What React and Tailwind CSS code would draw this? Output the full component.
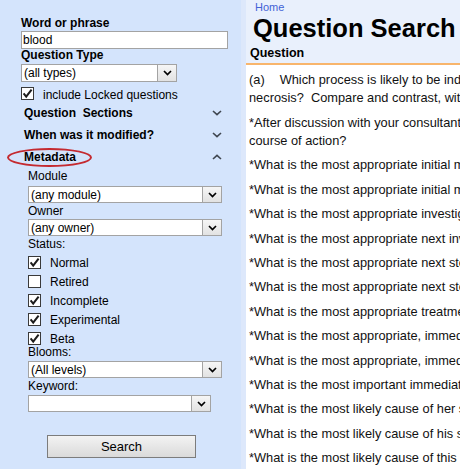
import React from 'react';

const Chevron = ({ up }) => (
  <svg width="10" height="6" viewBox="0 0 10 6" className="shrink-0">
    <path
      d={up ? 'M1 5L5 1.3L9 5' : 'M1 1L5 4.7L9 1'}
      fill="none"
      stroke="#3f4650"
      strokeWidth="1.6"
    />
  </svg>
);

const Box = ({ checked }) => (
  <span className="w-[13px] h-[13px] shrink-0 border border-[#3a3a3a] bg-white flex items-center justify-center">
    {checked && (
      <svg width="11" height="11" viewBox="0 0 11 11">
        <path d="M1.6 5.4L4.2 8.6L9.6 1.6" fill="none" stroke="#1c1c1c" strokeWidth="2" />
      </svg>
    )}
  </span>
);

const Select = ({ value, className }) => (
  <div className={`flex h-[17px] border border-[#a3a3a3] bg-white ${className}`}>
    <div className="flex-1 flex items-center pl-[2px] text-[12px] leading-[14px] whitespace-nowrap overflow-hidden">
      {value}
    </div>
    <div className="w-[19px] shrink-0 flex items-center justify-center border-l border-[#a3a3a3] bg-gradient-to-b from-[#f6f6f6] to-[#e2e2e2]">
      <svg width="9" height="6" viewBox="0 0 9 6">
        <path d="M1 1L4.5 4.5L8 1" fill="none" stroke="#000" strokeWidth="1.7" />
      </svg>
    </div>
  </div>
);

const Section = ({ title, up }) => (
  <div className="flex items-center justify-between h-[22px] pl-[24px] pr-[19px] text-[12px] font-bold leading-[14px]">
    <span className="whitespace-pre">{title}</span>
    <Chevron up={up} />
  </div>
);

const statuses = [
  ['Normal', true],
  ['Retired', false],
  ['Incomplete', true],
  ['Experimental', true],
  ['Beta', true],
];

const questions = [
  'initial management of this patient?',
  'initial management of this condition?',
  'investigation to confirm the diagnosis?',
  'next investigation in this patient?',
  'next step in management?',
  'next step in the management of this patient?',
  'treatment for this condition?',
];

const questions2 = [
  '*What is the most appropriate, immediate management?',
  '*What is the most appropriate, immediate treatment?',
  '*What is the most important immediate step?',
  '*What is the most likely cause of her symptoms?',
  '*What is the most likely cause of his symptoms?',
  '*What is the most likely cause of this presentation?',
];

const Row = ({ children }) => (
  <div className="py-[3px] pl-[3px] whitespace-nowrap">{children}</div>
);

export default function App() {
  return (
    <div className="w-[460px] h-[469px] overflow-hidden flex font-['Liberation_Sans',Arial,sans-serif] text-black">
      <div className="relative w-[241px] shrink-0 h-full bg-[#d4e4fc]">
        <div className="pl-[21px] pt-[17px]">
          <div className="text-[12px] font-bold leading-[13px]">Word or phrase</div>
          <div className="mt-[1px] w-[207px] h-[18px] border border-[#a3a3a3] bg-white flex items-center pl-[1px] text-[12px] leading-[14px]">
            blood
          </div>
          <div className="text-[12px] font-bold leading-[13px]">Question Type</div>
          <Select value="(all types)" className="mt-[2px] w-[156px] h-[18px]" />
          <div className="mt-[5px] flex items-start h-[15px]">
            <Box checked />
            <span className="ml-[9px] pt-[1px] text-[12px] leading-[14px]">include Locked questions</span>
          </div>
        </div>
        <Section title={'Question  Sections'} />
        <Section title="When was it modified?" />
        <Section title="Metadata" up />
        <div className="pl-[28px] text-[12px] leading-[13px]">
          <div className="mt-[2px]">Module</div>
          <Select value="(any module)" className="mt-[3px] w-[194px]" />
          <div className="mt-[2px]">Owner</div>
          <Select value="(any owner)" className="mt-[1px] w-[194px]" />
          <div className="mt-[2px]">Status:</div>
          <div className="mt-[4.5px] flex flex-col gap-[6.2px]">
            {statuses.map(([label, on]) => (
              <div key={label} className="flex items-start h-[13px]">
                <Box checked={on} />
                <span className="ml-[9px] pt-[1px] text-[12px] leading-[13px]">{label}</span>
              </div>
            ))}
          </div>
          <div className="mt-[1px]">Blooms:</div>
          <Select value="(All levels)" className="mt-[2px] w-[194px]" />
          <div className="mt-[2px]">Keyword:</div>
          <Select value="" className="mt-[2px] w-[183px]" />
        </div>
        <button className="mt-[23px] ml-[47px] w-[149px] h-[23px] border border-[#7c7c7c] bg-gradient-to-b from-[#f3f3f3] to-[#dadada] text-[13px] leading-[15px] text-black">
          Search
        </button>
        <div className="absolute left-[7px] top-[148px] w-[85px] h-[19px] rounded-[50%] border-2 border-[#c42a30]" />
      </div>

      <div className="w-[5px] shrink-0 h-full bg-[#dde8fb]" />

      <div className="flex-1 min-w-0 h-full flex flex-col overflow-hidden bg-white">
        <div className="bg-[#e9f0fc] border-b-2 border-[#f8b56c]">
          <div className="pl-[9px] pt-[1px] text-[11px] leading-[13px] text-[#4262d6]">Home</div>
          <div className="pl-[7px] mt-[1.4px] text-[25.5px] font-bold leading-[26px] whitespace-nowrap">
            Question Search
          </div>
          <div className="pl-[4px] mt-[4.8px] pb-[2.6px] text-[12.5px] font-bold leading-[14px]">Question</div>
        </div>
        <div className="pt-[3px] text-[12.8px] leading-[18.4px] text-[#111]">
          <Row>
            (a)<span className="inline-block w-[15px]" />Which process is likely to be induced in the tissue surrounding
            <br />
            necrosis?{'\u00a0\u00a0'}Compare and contrast, with reference to the cell changes seen
          </Row>
          <Row>
            *After discussion with your consultant, what is the most appropriate
            <br />
            course of action?
          </Row>
          {questions.map((q, i) => (
            <Row key={i}>*What is the most appropriate {q}</Row>
          ))}
          {questions2.map((q, i) => (
            <Row key={i}>{q}</Row>
          ))}
        </div>
      </div>
    </div>
  );
}
